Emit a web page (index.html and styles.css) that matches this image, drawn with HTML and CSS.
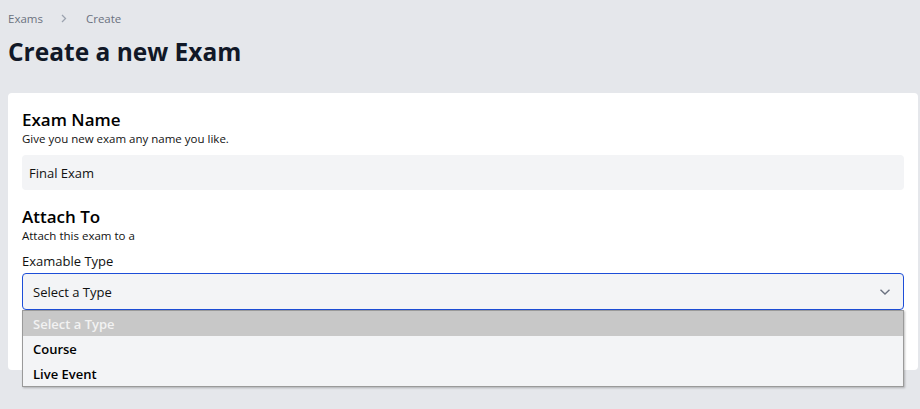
FILE: index.html
```html
<!DOCTYPE html>
<html lang="en">
<head>
<meta charset="utf-8">
<title>Create a new Exam</title>
<link rel="stylesheet" href="styles.css">
</head>
<body>
<nav class="crumbs">
  <span class="crumb">Exams</span>
  <svg class="sep" width="6" height="9" viewBox="0 0 6 9"><path d="M1 1l3.5 3.5L1 8" fill="none" stroke="#9ca3af" stroke-width="1.3"/></svg>
  <span class="crumb">Create</span>
</nav>
<h1 class="title">Create a new Exam</h1>
<main class="card">
  <section class="group">
    <h2 class="g-title">Exam Name</h2>
    <p class="g-desc">Give you new exam any name you like.</p>
    <div class="input">Final Exam</div>
  </section>
  <section class="group attach">
    <h2 class="g-title">Attach To</h2>
    <p class="g-desc">Attach this exam to a</p>
    <label class="label">Examable Type</label>
    <div class="select-wrap">
      <div class="select">
        <span>Select a Type</span>
        <svg class="chev" width="12" height="8" viewBox="0 0 12 8"><path d="M1.5 1.8L6 6l4.5-4.2" fill="none" stroke="#6b7280" stroke-width="1.4"/></svg>
      </div>
      <ul class="menu">
        <li class="opt placeholder">Select a Type</li>
        <li class="opt">Course</li>
        <li class="opt">Live Event</li>
      </ul>
    </div>
  </section>
</main>
</body>
</html>
```

FILE: styles.css
```css
* { box-sizing: border-box; }
html, body { margin: 0; padding: 0; }
body {
  background: #e5e7eb;
  font-family: "Open Sans", "Noto Sans", sans-serif;
  color: #111827;
  padding: 9px 2px 0 8px;
  width: 920px;
  height: 409px;
  overflow: hidden;
}
.crumbs {
  display: flex;
  align-items: center;
  height: 18px;
  font-size: 11.5px;
  font-weight: 500;
  color: #6b7280;
}
.sep { margin: 0 19px 0 18px; }
.title {
  margin: 8px 0 0 0;
  font-size: 24.5px;
  line-height: 34px;
  font-weight: 700;
  color: #111827;
}
.card {
  margin-top: 24px;
  background: #fff;
  border-radius: 4px;
  padding: 16px 14px 60px 14px;
}
.group { margin: 0; }
.attach { margin-top: 16px; }
.g-title {
  margin: 0;
  font-size: 17px;
  line-height: 22px;
  font-weight: 600;
  color: #000;
}
.g-desc {
  margin: 0;
  font-size: 11.5px;
  line-height: 16px;
  color: #111;
}
.input {
  margin-top: 8px;
  height: 35px;
  background: #f3f4f6;
  border-radius: 4px;
  padding: 0 7px;
  display: flex;
  align-items: center;
  font-size: 13px;
  color: #111;
}
.label {
  display: block;
  margin-top: 8px;
  font-size: 13px;
  line-height: 19px;
  color: #111;
}
.select-wrap { position: relative; margin-top: 2px; }
.select {
  height: 37px;
  background: #f3f4f6;
  border: 1px solid #1d4ed8;
  border-radius: 4px;
  padding: 0 12px 0 10px;
  display: flex;
  align-items: center;
  justify-content: space-between;
  font-size: 13px;
  color: #111;
}
.menu {
  position: absolute;
  left: 0;
  right: 0;
  top: 37px;
  margin: 0;
  padding: 0;
  list-style: none;
  background: #f3f4f6;
  border: 1px solid #9a9a9a;
  box-shadow: 1px 1px 2px rgba(0,0,0,0.25);
}
.opt {
  height: 25px;
  padding: 0 10px;
  display: flex;
  align-items: center;
  font-size: 13px;
  font-weight: 600;
  color: #000;
}
.placeholder {
  background: #c8c8c8;
  color: #f2f2f2;
}
```
